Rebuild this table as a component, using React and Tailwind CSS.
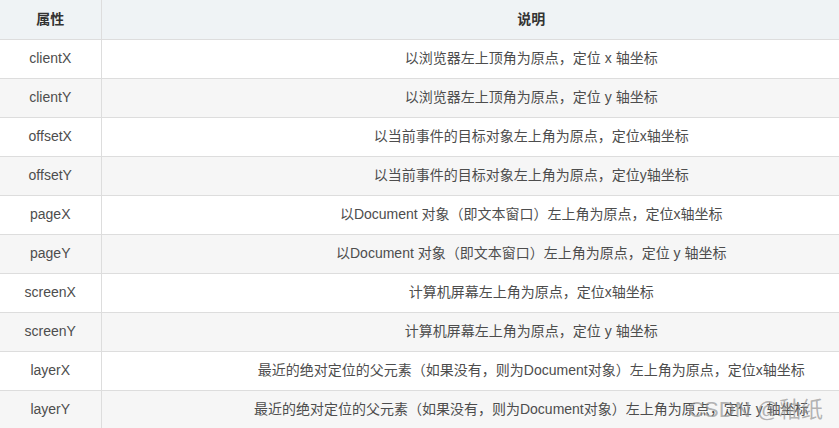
const rows = [
  ['clientX', '以浏览器左上顶角为原点，定位 x 轴坐标'],
  ['clientY', '以浏览器左上顶角为原点，定位 y 轴坐标'],
  ['offsetX', '以当前事件的目标对象左上角为原点，定位x轴坐标'],
  ['offsetY', '以当前事件的目标对象左上角为原点，定位y轴坐标'],
  ['pageX', '以Document 对象（即文本窗口）左上角为原点，定位x轴坐标'],
  ['pageY', '以Document 对象（即文本窗口）左上角为原点，定位 y 轴坐标'],
  ['screenX', '计算机屏幕左上角为原点，定位x轴坐标'],
  ['screenY', '计算机屏幕左上角为原点，定位 y 轴坐标'],
  ['layerX', '最近的绝对定位的父元素（如果没有，则为Document对象）左上角为原点，定位x轴坐标'],
  ['layerY', '最近的绝对定位的父元素（如果没有，则为Document对象）左上角为原点，定位 y 轴坐标'],
];

export default function App() {
  return (
    <div
      className="relative w-[839px] h-[428px] overflow-hidden bg-white"
      style={{ fontFamily: '"Liberation Sans", "Noto Sans CJK SC", sans-serif' }}
    >
      <table className="w-[961px] border-collapse text-[14px] text-[#4d4d4d]">
        <thead>
          <tr className="bg-[#eff3f5]">
            <th className="w-[101px] h-[39px] p-0 border-b border-r border-[#dddddd] font-bold text-[#333]">属性</th>
            <th className="h-[39px] p-0 border-b border-[#dddddd] font-bold text-[#333]">说明</th>
          </tr>
        </thead>
        <tbody>
          {rows.map(([name, desc], i) => (
            <tr key={name} className={i % 2 === 1 ? 'bg-[#f6f6f6]' : 'bg-white'}>
              <td className="h-[39px] p-0 text-center border-b border-r border-[#dddddd]">{name}</td>
              <td className="h-[39px] p-0 text-center border-b border-[#dddddd]">{desc}</td>
            </tr>
          ))}
        </tbody>
      </table>

      {/* watermark */}
      <div className="absolute right-[16px] bottom-[7px] text-[22px] leading-none text-[#8c8c8c]/65 pointer-events-none">
        CSDN @釉纸
      </div>
    </div>
  );
}
